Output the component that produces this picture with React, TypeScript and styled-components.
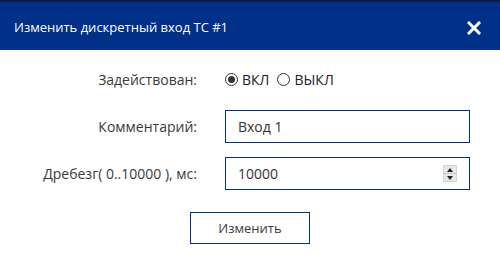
import React, { useState } from "react";
import styled, { createGlobalStyle } from "styled-components";

const GlobalStyle = createGlobalStyle`
  html, body {
    margin: 0;
    padding: 0;
    background: #ffffff;
  }
  * {
    box-sizing: border-box;
  }
`;

const Dialog = styled.div`
  width: 500px;
  height: 258px;
  display: flex;
  flex-direction: column;
  background: #ffffff;
  font-family: "Open Sans", "Noto Sans", sans-serif;
  color: #333333;
`;

const Header = styled.div`
  height: 50px;
  flex: none;
  display: flex;
  align-items: center;
  justify-content: space-between;
  padding: 0 18px 0 14px;
  background: #003087;
  border-top: 2px solid #0b1e4a;
`;

const Title = styled.div`
  color: #ffffff;
  font-size: 13px;
  padding-top: 2px;
`;

const CloseButton = styled.button`
  width: 16px;
  height: 16px;
  padding: 0;
  margin-top: 4px;
  border: none;
  background: transparent;
  cursor: pointer;
  display: flex;
  align-items: center;
  justify-content: center;
`;

const Body = styled.div`
  display: flex;
  flex-direction: column;
  padding-top: 13px;
`;

const Form = styled.div`
  display: grid;
  grid-template-columns: 200px 245px;
  grid-auto-rows: 33px;
  column-gap: 25px;
  row-gap: 14px;
  align-items: center;
`;

const Label = styled.label`
  text-align: right;
  font-size: 14px;
  color: #3a3a3a;
  padding-right: 3px;
`;

const RadioGroup = styled.div`
  display: flex;
  align-items: center;
  gap: 8px;
`;

const RadioOption = styled.label`
  display: flex;
  align-items: center;
  gap: 4px;
  font-size: 14px;
  color: #222222;
  cursor: pointer;
`;

const RadioCircle = styled.span<{ $checked: boolean }>`
  width: 13px;
  height: 13px;
  border-radius: 50%;
  border: 1px solid #333333;
  display: flex;
  align-items: center;
  justify-content: center;
  &::after {
    content: "";
    width: 7px;
    height: 7px;
    border-radius: 50%;
    background: ${(p) => (p.$checked ? "#333333" : "transparent")};
  }
`;

const Field = styled.div`
  height: 33px;
  border: 1px solid #003087;
  display: flex;
  align-items: center;
  padding: 0 11px 0 12px;
`;

const TextInput = styled.input`
  flex: 1;
  min-width: 0;
  border: none;
  outline: none;
  padding: 0;
  font-family: inherit;
  font-size: 14px;
  color: #333333;
  background: transparent;
`;

const Spinner = styled.div`
  width: 14px;
  height: 17px;
  display: flex;
  flex-direction: column;
  background: #e8e8e8;
  border: 1px solid #d4d4d4;
  margin-right: 1px;
`;

const SpinHalf = styled.div<{ $down?: boolean }>`
  flex: 1;
  display: flex;
  align-items: center;
  justify-content: center;
  border-top: ${(p) => (p.$down ? "1px solid #c8c8c8" : "none")};
  &::after {
    content: "";
    width: 0;
    height: 0;
    border-left: 3px solid transparent;
    border-right: 3px solid transparent;
    ${(p) =>
      p.$down ? "border-top: 4px solid #222;" : "border-bottom: 4px solid #222;"}
  }
`;

const Footer = styled.div`
  display: flex;
  justify-content: center;
  padding-top: 22px;
`;

const SubmitButton = styled.button`
  width: 120px;
  height: 32px;
  border: 1px solid #003087;
  background: #ffffff;
  font-family: inherit;
  font-size: 13px;
  color: #3a3a3a;
  cursor: pointer;
`;

const App: React.FC = () => {
  const [enabled, setEnabled] = useState(true);
  const [comment, setComment] = useState("Вход 1");
  const [debounce, setDebounce] = useState("10000");

  return (
    <Dialog>
      <GlobalStyle />
      <Header>
        <Title>Изменить дискретный вход ТС #1</Title>
        <CloseButton aria-label="Закрыть">
          <svg width="14" height="14" viewBox="0 0 14 14">
            <path d="M2 2 L12 12 M12 2 L2 12" stroke="#ffffff" strokeWidth="3" strokeLinecap="square" />
          </svg>
        </CloseButton>
      </Header>
      <Body>
        <Form>
          <Label>Задействован:</Label>
          <RadioGroup>
            <RadioOption onClick={() => setEnabled(true)}>
              <RadioCircle $checked={enabled} />
              ВКЛ
            </RadioOption>
            <RadioOption onClick={() => setEnabled(false)}>
              <RadioCircle $checked={!enabled} />
              ВЫКЛ
            </RadioOption>
          </RadioGroup>

          <Label>Комментарий:</Label>
          <Field>
            <TextInput value={comment} onChange={(e) => setComment(e.target.value)} />
          </Field>

          <Label>Дребезг( 0..10000 ), мс:</Label>
          <Field>
            <TextInput value={debounce} onChange={(e) => setDebounce(e.target.value)} />
            <Spinner>
              <SpinHalf />
              <SpinHalf $down />
            </Spinner>
          </Field>
        </Form>
        <Footer>
          <SubmitButton>Изменить</SubmitButton>
        </Footer>
      </Body>
    </Dialog>
  );
};

export default App;
